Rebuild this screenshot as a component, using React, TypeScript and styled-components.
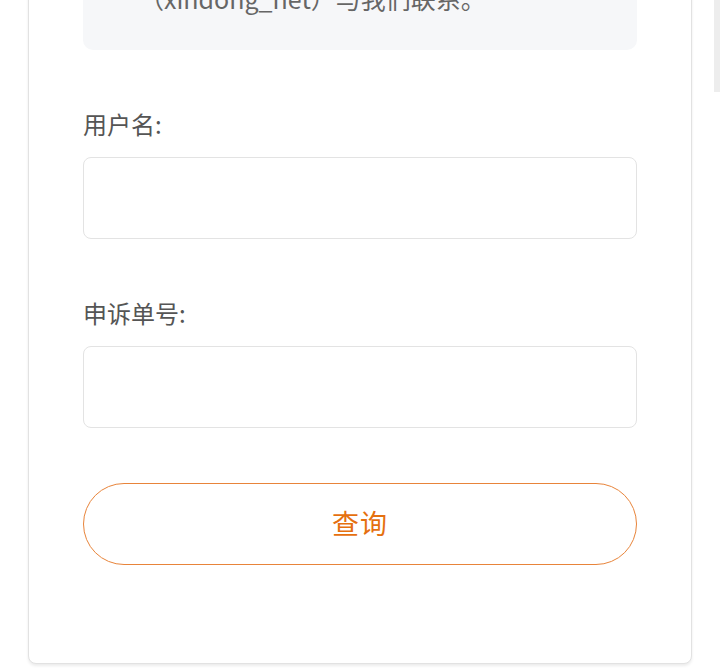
import styled, { createGlobalStyle } from 'styled-components';

const GlobalStyle = createGlobalStyle`
    html, body {
        margin: 0;
        padding: 0;
        background: #ffffff;
        font-family: "Noto Sans CJK SC", "Noto Sans", Roboto, sans-serif;
        overflow: hidden;
    }
`;

// Страница с боковыми отступами
const Page = styled.div`
    padding: 0 28px 6px 28px;
    height: 669px;
    box-sizing: border-box;
    overflow: hidden;
`;

// Карточка формы
const Card = styled.div`
    margin-top: -40px;
    background: #fff;
    border: 1px solid #e2e2e2;
    border-radius: 8px;
    box-shadow: 0 2px 3px rgba(0, 0, 0, 0.08);
    padding: 0 54px 98px 54px;
    display: flex;
    flex-direction: column;
`;

// Серый блок с пояснением (верх обрезан)
const Notice = styled.div`
    background: #f6f7f9;
    border-radius: 0 0 10px 10px;
    padding: 0 24px 0 56px;
    height: 89px;
    display: flex;
    align-items: flex-start;
`;

const NoticeText = styled.p`
    margin: 0;
    margin-top: 17px;
    font-size: 25px;
    line-height: 40px;
    color: #666;
`;

const Field = styled.div`
    display: flex;
    flex-direction: column;
    margin-top: 56px;
`;

const Label = styled.label`
    font-size: 24px;
    line-height: 36px;
    color: #555;
    margin-bottom: 15px;
`;

const Input = styled.input`
    height: 82px;
    box-sizing: border-box;
    border: 1px solid #e3e3e3;
    border-radius: 8px;
    padding: 0 20px;
    font-size: 24px;
    font-family: inherit;
    outline: none;
    background: #fff;
`;

const QueryButton = styled.button`
    margin-top: 55px;
    height: 82px;
    padding: 0 0 4px 0;
    border: 1.5px solid #e8843a;
    border-radius: 41px;
    background: #fff;
    color: #e5700f;
    font-size: 27px;
    font-weight: 400;
    font-family: inherit;
    letter-spacing: 1px;
    cursor: pointer;
`;

// Полоса прокрутки справа
const ScrollThumb = styled.div`
    position: fixed;
    top: 0;
    right: 0;
    width: 6px;
    height: 92px;
    background: #ededed;
`;

export default function App() {
    return (
        <>
            <GlobalStyle />
            <Page>
                <Card>
                    <Notice>
                        <NoticeText>（xindong_net）与我们联系。</NoticeText>
                    </Notice>
                    <Field>
                        <Label>用户名:</Label>
                        <Input />
                    </Field>
                    <Field>
                        <Label>申诉单号:</Label>
                        <Input />
                    </Field>
                    <QueryButton>查询</QueryButton>
                </Card>
            </Page>
            <ScrollThumb />
        </>
    );
}
